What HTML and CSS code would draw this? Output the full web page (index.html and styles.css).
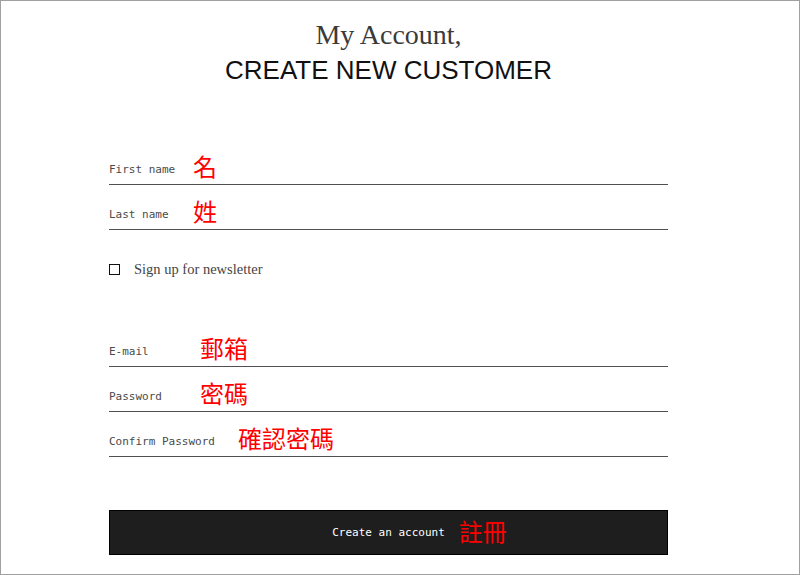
FILE: index.html
```html
<!DOCTYPE html>
<html lang="en">
<head>
    <meta charset="UTF-8">
    <meta name="viewport" content="width=device-width, initial-scale=1.0">
    <title>Create new customer</title>
    <link rel="stylesheet" href="styles.css">
</head>
<body>
    <div class="marco">
        <!-- Encabezado -->
        <div class="cabecera">
            <h1 class="titulo">My Account,</h1>
            <h2 class="subtitulo">CREATE NEW CUSTOMER</h2>
        </div>

        <!-- Formulario -->
        <form class="registro">
            <div class="campo">
                <label class="etiqueta corta">First name</label><span class="nota">名</span>
            </div>
            <div class="campo">
                <label class="etiqueta corta">Last name</label><span class="nota">姓</span>
            </div>

            <label class="boletin">
                <span class="casilla"></span>
                <span>Sign up for newsletter</span>
            </label>

            <div class="campo primero">
                <label class="etiqueta media">E-mail</label><span class="nota">郵箱</span>
            </div>
            <div class="campo">
                <label class="etiqueta media">Password</label><span class="nota">密碼</span>
            </div>
            <div class="campo">
                <label class="etiqueta larga">Confirm Password</label><span class="nota">確認密碼</span>
            </div>

            <button type="button" class="boton">
                <span class="boton-texto">Create an account<span class="nota nota-boton">註冊</span></span>
            </button>
        </form>
    </div>
</body>
</html>
```

FILE: styles.css
```css
/* Estilos generales */
* {
    box-sizing: border-box;
}

html, body {
    margin: 0;
    padding: 0;
}

.marco {
    width: 800px;
    height: 575px;
    border: 1px solid #a0a0a0;
    background-color: #fff;
    padding-left: 108px;
    overflow: hidden;
}

/* Encabezado */
.cabecera {
    width: 559px;
    text-align: center;
    padding-top: 18px;
}

.titulo {
    margin: 0;
    font-family: "Liberation Serif", serif;
    font-weight: normal;
    font-size: 28px;
    line-height: 32px;
    color: #3a3a3a;
}

.subtitulo {
    margin: 4px 0 0;
    font-family: "Liberation Sans", Arial, sans-serif;
    font-weight: normal;
    font-size: 26px;
    line-height: 30px;
    color: #111;
}

/* Formulario */
.registro {
    width: 559px;
    margin-top: 55px;
}

.campo {
    display: flex;
    align-items: flex-end;
    height: 45px;
    padding-bottom: 4px;
    border-bottom: 1px solid #505050;
}

.campo.primero {
    margin-top: 44px;
}

.etiqueta {
    font-family: "DejaVu Sans Mono", monospace;
    font-size: 11px;
    line-height: 13px;
    margin-bottom: 4px;
    color: #4a4a4a;
    flex-shrink: 0;
}

.corta { width: 84px; }
.media { width: 91px; }
.larga { width: 129px; }

.nota {
    font-family: "Noto Sans CJK TC", sans-serif;
    font-size: 24px;
    line-height: 28px;
    color: #f00;
}

/* Casilla del boletín */
.boletin {
    display: flex;
    align-items: center;
    gap: 14px;
    margin-top: 31px;
    font-family: "Liberation Serif", serif;
    font-size: 14.5px;
    color: #444;
}

.casilla {
    width: 11px;
    height: 11px;
    border: 1px solid #111;
}

/* Botón */
.boton {
    display: flex;
    align-items: center;
    justify-content: center;
    width: 559px;
    height: 45px;
    margin-top: 53px;
    padding: 0;
    background-color: #1e1e1e;
    border: 1px solid #000;
    cursor: pointer;
}

.boton-texto {
    position: relative;
    font-family: "DejaVu Sans Mono", monospace;
    font-size: 11px;
    color: #fff;
}

.nota-boton {
    position: absolute;
    left: calc(100% + 14px);
    top: 50%;
    transform: translateY(-58%);
    white-space: nowrap;
}
```
